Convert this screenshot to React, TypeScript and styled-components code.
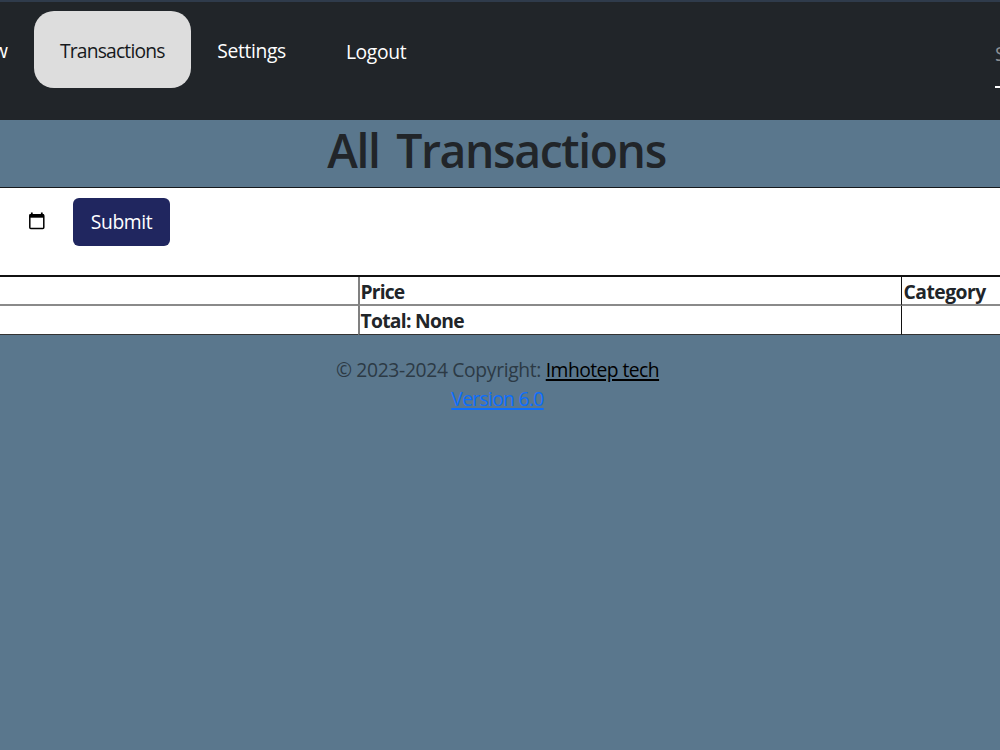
import React from "react";
import styled, { createGlobalStyle } from "styled-components";

const GlobalStyle = createGlobalStyle`
  * { box-sizing: border-box; }
  body {
    margin: 0;
    height: 750px;
    overflow: hidden;
    background: #5a778d;
    color: #212529;
    font: 400 19.3px/30px "Segoe UI", "Open Sans", "Noto Sans", sans-serif;
    white-space: nowrap;
  }
`;

const Label = styled.span<{ $track?: number }>`
  letter-spacing: ${(p) => p.$track ?? 0}px;
`;

const NavBar = styled.nav`
  display: flex;
  align-items: flex-start;
  height: 120px;
  padding-top: 9px;
  border-top: 2px solid #2f3b4b;
  background: #212529;
  color: #fff;
  overflow: hidden;
`;

const NavItem = styled.a<{ $width: number; $inset?: number; $active?: boolean; $drop?: number }>`
  flex: none;
  width: ${(p) => p.$width}px;
  height: 77px;
  padding-top: ${(p) => 25 + (p.$drop ?? 0)}px;
  padding-left: ${(p) => p.$inset ?? 26}px;
  border-radius: 20px;
  background: ${(p) => (p.$active ? "#ddd" : "transparent")};
  color: ${(p) => (p.$active ? "#16191c" : "#fff")};
`;

const ClippedItem = styled(NavItem)`
  display: flex;
  justify-content: flex-end;
  padding-right: 26px;
`;

const Search = styled.div`
  flex: none;
  width: 200px;
  height: 77px;
  margin-left: auto;
  margin-right: -195px;
  padding-top: 28px;
  border-bottom: 2px solid #fff;
  color: #8b8f93;
`;

const Title = styled.h1`
  height: 67px;
  margin: 0;
  padding-right: 7px;
  font-size: 46.3px;
  font-weight: 600;
  line-height: 62px;
  text-align: center;
  word-spacing: 6px;
`;

const Panel = styled.main`
  border-top: 1px solid #16191c;
  background: #fff;
`;

const Filter = styled.form`
  display: flex;
  height: 87px;
  padding: 10px 0 0 28px;
  gap: 28.3px;
`;

const CalendarIcon = styled.svg`
  flex: none;
  width: 17px;
  height: 19px;
  margin-top: 14px;
`;

const Submit = styled.button`
  width: 96.4px;
  height: 48px;
  padding: 0;
  border: 0;
  border-radius: 6px;
  background: #20265f;
  color: #fff;
  font: inherit;
  line-height: 32px;
`;

const Table = styled.div`
  display: grid;
  grid-template-columns: 358px 543px 99px;
  grid-template-rows: 29px 29px;
  border-top: 2px solid #111;
  font-weight: 700;
  line-height: 29px;
`;

const Cell = styled.div<{ $first?: boolean; $soft?: boolean; $last?: boolean }>`
  padding-left: ${(p) => (p.$soft ? 0.5 : 1.5)}px;
  border-left: ${(p) => (p.$first ? "0" : p.$soft ? "2px solid #808080" : "1px solid #111")};
  border-bottom: ${(p) => (p.$last ? "1px solid #333" : "2px solid #8a8a8a")};
`;

const Footer = styled.footer`
  padding: 20px 5px 0 0;
  line-height: 29px;
  text-align: center;
`;

const FooterLink = styled.a<{ $color: string }>`
  color: ${(p) => p.$color};
  text-decoration: underline;
  text-decoration-thickness: 1.5px;
  text-underline-offset: 2px;
`;

const Muted = styled.span`
  color: #2c3a45;
`;

export default function App() {
  return (
    <>
      <GlobalStyle />
      <NavBar>
        <ClippedItem $width={34} $inset={0}><Label>w</Label></ClippedItem>
        <NavItem $width={156.5} $active><Label $track={-0.83}>Transactions</Label></NavItem>
        <NavItem $width={129} $inset={26.8}><Label $track={-0.37}>Settings</Label></NavItem>
        <NavItem $width={112} $drop={1} $inset={26.4}><Label $track={-0.35}>Logout</Label></NavItem>
        <Search>Search</Search>
      </NavBar>
      <Title><Label $track={-1.38}>All Transactions</Label></Title>
      <Panel>
        <Filter>
          <CalendarIcon viewBox="0 0 17 19">
            <path d="M3.8 0.5v3M13.8 0.5v3" stroke="#000" strokeWidth="1.8" />
            <rect x="1.8" y="2.7" width="14" height="13.8" rx="1" fill="none" stroke="#000" strokeWidth="1.5" />
            <path d="M1.5 2.2h14.5v3.5H1.5z" fill="#000" />
          </CalendarIcon>
          <Submit type="button"><Label $track={-0.42}>Submit</Label></Submit>
        </Filter>
        <Table>
          <Cell $first />
          <Cell $soft><Label $track={-0.85}>Price</Label></Cell>
          <Cell><Label $track={-0.5}>Category</Label></Cell>
          <Cell $first $last />
          <Cell $soft $last><Label $track={-0.7}>Total: None</Label></Cell>
          <Cell $last />
        </Table>
      </Panel>
      <Footer>
        <div>
          <Muted><Label $track={-0.34}>© 2023-2024 Copyright: </Label></Muted>
          <FooterLink $color="#000"><Label $track={-0.55}>Imhotep tech</Label></FooterLink>
        </div>
        <FooterLink $color="#0d6efd"><Label $track={-0.68}>Version 6.0</Label></FooterLink>
      </Footer>
    </>
  );
}
